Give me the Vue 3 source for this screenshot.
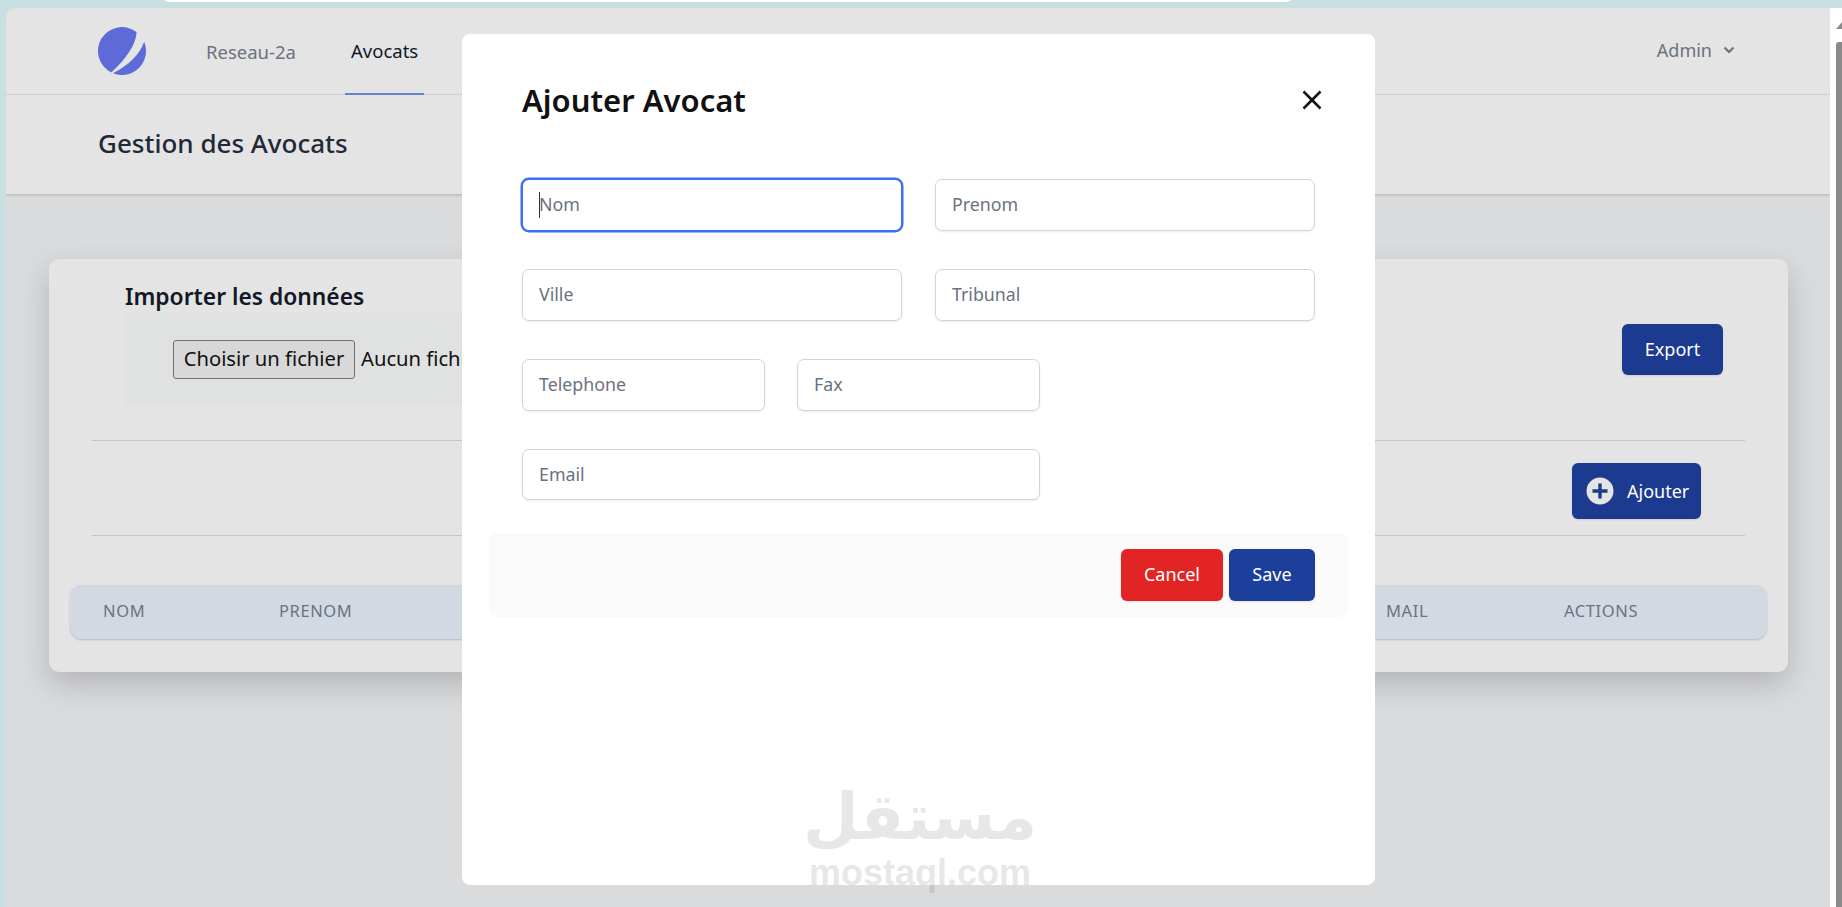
<template>
  <div class="desktop">
    <div class="chrome-tab"></div>
    <div class="page">
      <div class="window">
        <header class="topbar">
          <nav class="nav">
            <svg class="logo" viewBox="0 0 48 48">
              <path d="M38.540 4.910C38.500 16 29 31 13.270 45.470A24 24 0 1 1 38.540 4.910z" fill="#5e6ad8" />
              <path d="M46.150 14.760C42 27 31 38 15.100 46.290A24 24 0 0 0 46.150 14.760z" fill="#5e6ad8" />
            </svg>
            <a class="nav-link">Reseau-2a</a>
            <a class="nav-link active">Avocats</a>
          </nav>
          <div class="user">
            Admin
            <svg viewBox="0 0 12 8" class="chev"><path d="M1.500 1.500 6 6l4.500-4.500" /></svg>
          </div>
        </header>
        <div class="subheader">
          <h1>Gestion des Avocats</h1>
        </div>
        <main class="content">
          <section class="card">
            <div class="import-row">
              <div class="import">
                <h2>Importer les données</h2>
                <div class="dropbox">
                  <button class="file-btn">Choisir un fichier</button>
                  <span class="file-name">Aucun fichier choisi</span>
                </div>
              </div>
              <button class="btn export">Export</button>
            </div>
            <div class="add-row">
              <button class="btn add">
                <svg viewBox="0 0 28 28" class="plus">
                  <circle cx="14" cy="14" r="13.500" fill="#e4e4e4" />
                  <path d="M14 6.500v15M6.500 14h15" stroke="#1c3a8f" stroke-width="3.400" />
                </svg>
                Ajouter
              </button>
            </div>
            <div class="thead">
              <span v-for="c in columns" :key="c.label" :style="{ left: c.x + 'px' }">{{ c.label }}</span>
            </div>
          </section>
        </main>

        <div class="modal">
          <div class="modal-head">
            <h3>Ajouter Avocat</h3>
            <svg class="close" viewBox="0 0 20 20"><path d="M1.500 1.500l17 17M18.500 1.500l-17 17" /></svg>
          </div>
          <form class="form" @submit.prevent>
            <div class="field focused">
              <input placeholder="Nom" />
              <i class="caret"></i>
            </div>
            <div class="field"><input placeholder="Prenom" /></div>
            <div class="field"><input placeholder="Ville" /></div>
            <div class="field"><input placeholder="Tribunal" /></div>
            <div class="row-small">
              <div class="field"><input placeholder="Telephone" /></div>
              <div class="field"><input placeholder="Fax" /></div>
            </div>
            <div class="field wide"><input placeholder="Email" /></div>
          </form>
          <div class="modal-foot">
            <button class="btn cancel">Cancel</button>
            <button class="btn save">Save</button>
          </div>
        </div>
        <div class="watermark">
          <div class="wm-ar">مستقل</div>
          <div class="wm-en">mostaql.com</div>
        </div>
      </div>
      <div class="scrollbar">
        <div class="sb-arrow"></div>
        <div class="sb-thumb"></div>
      </div>
    </div>
  </div>
</template>

<script setup>
const columns = [
  { label: 'NOM', x: 33 },
  { label: 'PRENOM', x: 209 },
  { label: 'MAIL', x: 1316 },
  { label: 'ACTIONS', x: 1494 },
]
</script>

<style>
html, body { margin: 0; height: 100%; overflow: hidden; }
</style>

<style scoped>
.desktop {
  height: 907px; background: #c8e0e4; position: relative; overflow: hidden;
  font-family: "Noto Sans", Lato, sans-serif;
}
.chrome-tab {
  position: absolute; left: 160px; top: -8px; width: 1135px; height: 10px;
  background: #fff; border-radius: 0 0 10px 10px;
}
.page { display: flex; padding: 8px 0 0 6px; height: 907px; box-sizing: border-box; }
.window {
  position: relative; flex: 1; background: #dadbdd; border-radius: 10px 0 0 0; overflow: hidden;
}
.topbar {
  height: 86px; background: #e4e4e4; border-bottom: 1px solid #d6d6d6;
  display: flex; align-items: center; justify-content: space-between;
  padding: 0 95px 0 92px;
}
.nav { display: flex; align-items: center; height: 100%; }
.logo { width: 48px; height: 48px; margin-right: 54px; }
.nav-link {
  color: #6b7280; font-size: 18.500px; height: 100%; display: flex; align-items: center;
  padding: 0 6px; margin-right: 43px; box-sizing: border-box; margin-top: 1px;
}
.nav-link.active { color: #111827; border-bottom: 2px solid #6b83d6; }
.user { color: #6b7280; font-size: 18px; display: flex; align-items: center; gap: 11px; margin-top: -2px; }
.chev { width: 12px; height: 8px; fill: none; stroke: #6b7280; stroke-width: 2.200; }
.subheader {
  height: 99px; background: #e4e4e4; display: flex; align-items: center; padding: 0 0 4px 92px;
  box-sizing: border-box;
  box-shadow: 0 1px 3px rgba(0,0,0,.2);
  position: relative;
}
h1 { margin: 0; font-size: 26px; font-weight: 500; color: #1f2937; }
.content { padding: 65px 42px 0 43px; }
.card {
  background: #e4e4e4; border-radius: 10px; height: 413px; box-sizing: border-box;
  box-shadow: 0 12px 30px rgba(0,0,0,.18); padding: 22px 21px 0; position: relative;
}
.import-row { display: flex; justify-content: space-between; height: 159px; border-bottom: 1px solid #c2c5cb; margin: 0 22px; padding-left: 33px; padding-right: 22px; }
.import { flex: 1; }
h2 { margin: 0; font-size: 22.800px; font-weight: 600; color: #111827; line-height: 32px; }
.dropbox {
  background: #e0e1e1; height: 93px; display: flex; align-items: center; padding: 0 0 4px 48px; width: 500px;
  box-sizing: border-box;
  font-size: 20.200px; color: #111;
}
.file-btn {
  height: 39px; width: 182px; background: #d8d8d8; border: 1px solid #6f6f78; border-radius: 3px;
  font: inherit; color: #111; padding: 0 0 4px; margin-right: 6px; position: relative; top: 2px;
}
.btn {
  border: 0; border-radius: 6px; color: #fff; font-family: inherit; font-size: 18px; padding: 0 0 2px;
  box-shadow: 0 1px 2px rgba(0,0,0,.1);
}
.export { background: #1c3a8f; width: 101px; height: 51px; margin-top: 43px; }
.add-row {
  display: flex; justify-content: flex-end; align-items: center; height: 95px; margin: 0 22px;
  border-bottom: 1px solid #c2c5cb; padding: 6px 44px 0 0; box-sizing: border-box;
}
.add {
  background: #1c3a8f; width: 129px; height: 56px; display: flex; align-items: center; gap: 13px; padding: 0 0 0 14px;
  box-sizing: border-box;
}
.plus { width: 28px; height: 28px; }
.thead {
  position: relative; margin-top: 49px; height: 54px; background: #d2d9e3; border-radius: 12px;
  box-shadow: 0 1px 2px rgba(60,110,190,.35); color: #6b7280; font-size: 16.500px; letter-spacing: .6px;
}
.thead span { position: absolute; top: 14px; }

.modal {
  position: absolute; left: 456px; top: 26px; width: 913px; height: 851px; background: #fff;
  border-radius: 8px; overflow: hidden; box-sizing: border-box; padding: 0 27px;
}
.modal-head {
  display: flex; justify-content: space-between; align-items: center; height: 64px; margin-top: 34px;
  padding: 0 26px 0 33px;
}
h3 { margin: 0; font-size: 31px; font-weight: 600; color: #111; }
.close { width: 20px; height: 20px; fill: none; stroke: #111; stroke-width: 2.500; }
.form {
  display: grid; grid-template-columns: 380px 380px; column-gap: 33px; row-gap: 38px;
  padding: 47px 0 0 33px;
}
.field { position: relative; height: 52px; }
.field input {
  width: 100%; height: 100%; box-sizing: border-box; border: 1px solid #d1d5db; border-radius: 7px;
  padding: 0 16px 2px; font-family: inherit; font-size: 17.800px; outline: none; background: #fff;
  box-shadow: 0 1px 2px rgba(0,0,0,.08);
}
.field input::placeholder { color: #6b7280; opacity: 1; }
.focused input { border: 1px solid #3b6ef0; box-shadow: 0 0 0 1.500px #3b6ef0; }
.caret { position: absolute; left: 17px; top: 13px; width: 1px; height: 26px; background: #333; }
.row-small { display: flex; gap: 32px; width: 518px; grid-column: 1 / 3; }
.row-small .field { width: 243px; }
.wide { width: 518px; grid-column: 1 / 3; height: 51px; }
.modal-foot {
  margin-top: 33px; height: 84px; background: #fafafa; border-radius: 8px; width: 859px;
  display: flex; justify-content: flex-end; align-items: center; gap: 6px; padding-right: 33px; box-sizing: border-box;
}
.cancel { background: #e22424; width: 102px; height: 52px; }
.save { background: #1c3f9c; width: 86px; height: 52px; }
.watermark {
  position: absolute; left: 754px; width: 320px; top: 770px; text-align: center; color: #000; opacity: .09; font-weight: 700;
  display: flex; flex-direction: column; align-items: center;
}
.wm-ar { font-family: "DejaVu Sans", sans-serif; font-size: 64px; line-height: 78px; }
.wm-en { font-family: "Liberation Sans", sans-serif; font-size: 36px; line-height: 34px; }

.scrollbar { width: 12px; background: #fff; position: relative; }
.sb-thumb { position: absolute; left: 6px; top: 34px; right: 0; bottom: 0; background: #8a8a8a; border-radius: 3px 0 0 0; }
.sb-arrow {
  position: absolute; right: 0; top: 14px; width: 0; height: 0;
  border-left: 6px solid transparent; border-bottom: 7px solid #8a8a8a;
}
</style>
